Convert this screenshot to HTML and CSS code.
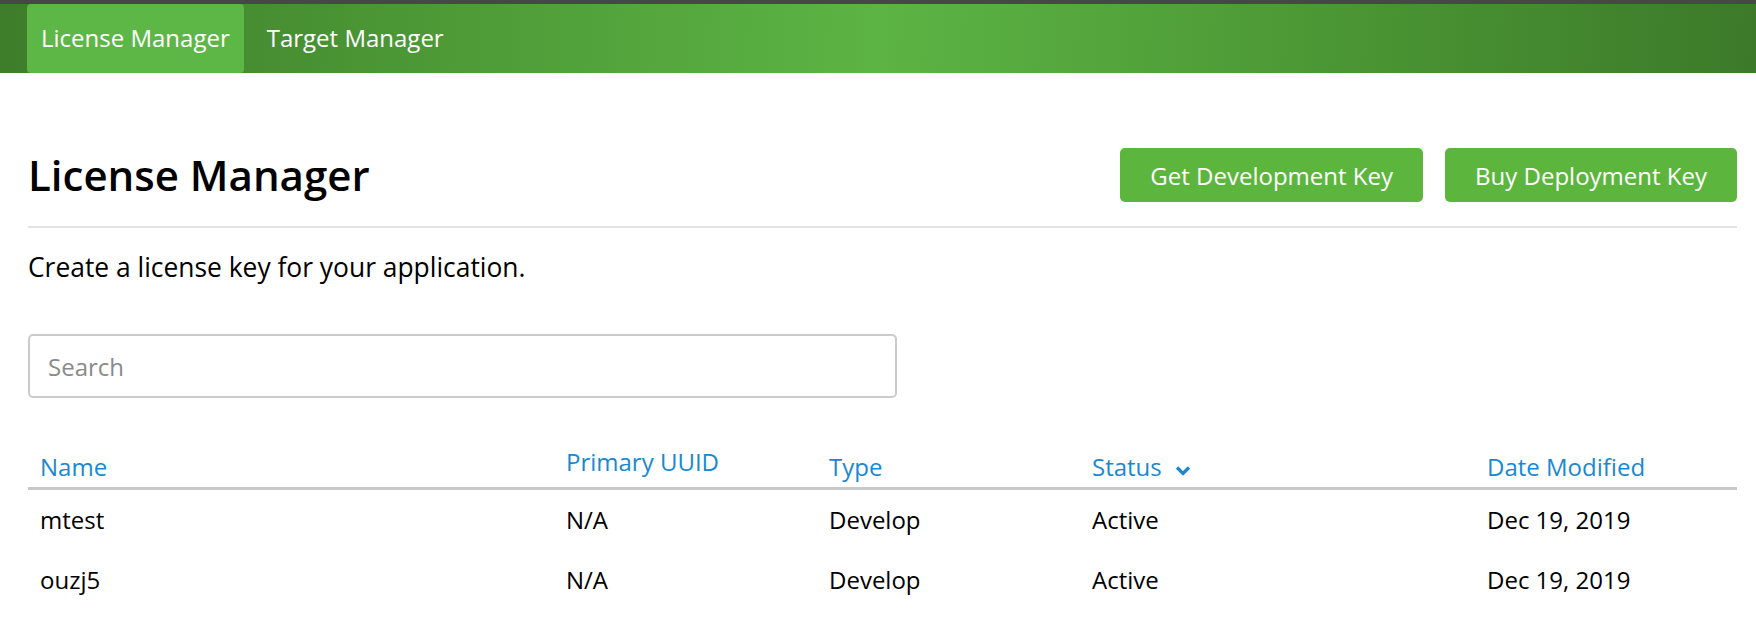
FILE: index.html
```html
<!DOCTYPE html>
<html lang="en">
<head>
<meta charset="utf-8">
<title>License Manager</title>
<link rel="stylesheet" href="styles.css">
</head>
<body>
<header class="topbar">
  <nav class="tabs">
    <a class="tab tab-active">License Manager</a>
    <a class="tab">Target Manager</a>
  </nav>
</header>
<main class="page">
  <div class="page-head">
    <h1 class="title">License Manager</h1>
    <div class="actions">
      <button class="btn">Get Development Key</button>
      <button class="btn">Buy Deployment Key</button>
    </div>
  </div>
  <p class="intro">Create a license key for your application.</p>
  <input class="search" type="text" placeholder="Search">
  <div class="grid">
    <div class="row head">
      <div class="cell">Name</div>
      <div class="cell cell-raised">Primary UUID</div>
      <div class="cell">Type</div>
      <div class="cell">Status <svg class="chev" width="16" height="11" viewBox="0 0 16 11"><path d="M2 2.5 L8 8.5 L14 2.5" fill="none" stroke="#1a88d0" stroke-width="3.2"/></svg></div>
      <div class="cell">Date Modified</div>
    </div>
    <div class="row">
      <div class="cell">mtest</div>
      <div class="cell">N/A</div>
      <div class="cell">Develop</div>
      <div class="cell">Active</div>
      <div class="cell">Dec 19, 2019</div>
    </div>
    <div class="row">
      <div class="cell">ouzj5</div>
      <div class="cell">N/A</div>
      <div class="cell">Develop</div>
      <div class="cell">Active</div>
      <div class="cell">Dec 19, 2019</div>
    </div>
  </div>
</main>
</body>
</html>
```
FILE: styles.css
```css
* { box-sizing: border-box; }
html, body { margin: 0; padding: 0; background: #fff; }
body {
  font-family: "Open Sans", "Noto Sans", Arial, sans-serif;
  font-size: 24px;
  color: #111;
  overflow: hidden;
}
.topbar {
  border-top: 4px solid #474747;
  height: 73px;
  background: linear-gradient(92deg, #3e7d2b 0%, #4a9434 20%, #5cb444 50%, #4a9433 78%, #3c7a2a 100%);
  padding-left: 27px;
}
.tabs { display: flex; gap: 9px; height: 100%; }
.tab {
  display: flex;
  align-items: center;
  padding: 0 14px 3px;
  color: #fff;
  font-size: 24px;
  border-radius: 4px;
  text-decoration: none;
}
.tab-active { background: #5db746; }
.page { padding: 0 19px 0 28px; }
.page-head {
  display: flex;
  justify-content: space-between;
  align-items: center;
  margin-top: 75px;
  padding-bottom: 24px;
  border-bottom: 2px solid #e3e3e3;
}
.title {
  margin: 0;
  font-size: 42px;
  font-weight: 600;
  line-height: 54px;
  color: #000;
}
.actions { display: flex; gap: 22px; }
.btn {
  height: 54px;
  padding: 0 30px;
  border: none;
  border-radius: 5px;
  background: #5cb63e;
  color: #fff;
  font-family: inherit;
  font-size: 24px;
}
.intro {
  margin: 22px 0 0;
  font-size: 26.4px;
  line-height: 34px;
  color: #000;
}
.search {
  display: block;
  margin-top: 50px;
  width: 869px;
  height: 64px;
  border: 2px solid #cbcbcb;
  border-radius: 5px;
  padding: 0 18px;
  font-family: inherit;
  font-size: 24px;
  color: #333;
}
.search::placeholder { color: #8a8a8a; }
.grid { margin-top: 40px; }
.row {
  display: grid;
  grid-template-columns: 526px 263px 263px 395px 1fr;
  height: 60px;
  align-items: center;
  color: #000;
}
.row.head {
  height: 52px;
  align-items: end;
  border-bottom: 3px solid #c8c8c8;
  color: #1a88d0;
}
.cell { padding: 0 12px; line-height: 30px; white-space: nowrap; }
.head .cell { padding-bottom: 5px; }
.head .cell-raised { padding-bottom: 10px; }
.chev { margin-left: 7px; vertical-align: 0; }
```
